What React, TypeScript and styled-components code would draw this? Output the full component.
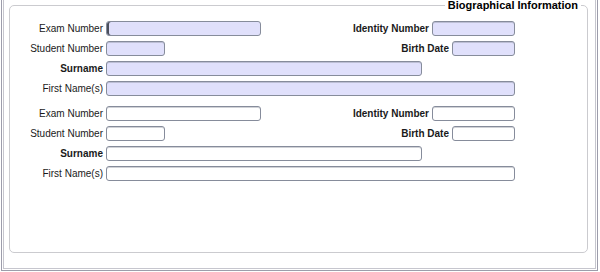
import React from "react";
import styled, { createGlobalStyle } from "styled-components";

const Global = createGlobalStyle`
  html, body { margin: 0; padding: 0; background: #ffffff; }
  body { font-family: "Liberation Sans", Arial, sans-serif; color: #000; }
  #root { width: 600px; height: 272px; overflow: hidden; }
`;

const Shell = styled.div`
  box-sizing: border-box;
  width: 597px;
  height: 271px;
  margin-left: 1px;
  border: 1px solid #9d9dab;
  border-top: none;
  padding: 0 1px 1px 1px;
`;

const Inner = styled.div`
  box-sizing: border-box;
  height: 100%;
  border: 1px solid #c6c6ce;
  border-top: none;
  padding: 0 7px 0 5px;
`;

const Fieldset = styled.fieldset`
  box-sizing: border-box;
  margin: 0;
  height: 253px;
  padding: 0;
  border: 1px solid #cbcbcf;
  border-radius: 5px;
  min-width: 0;
`;

const Legend = styled.legend`
  margin-left: auto;
  margin-right: 6px;
  padding: 0 3px;
  font-size: 11px;
  line-height: 11px;
  font-weight: bold;
  color: #000;
`;

const Form = styled.div`
  display: flex;
  flex-direction: column;
  gap: 10px;
  padding: 10px 72px 0 0;
`;

const Group = styled.div`
  display: flex;
  flex-direction: column;
  gap: 5px;
`;

const Row = styled.div`
  display: flex;
  align-items: center;
  height: 15px;
`;

const Label = styled.label<{ $bold?: boolean; $w?: number }>`
  flex-shrink: 0;
  ${(p) => (p.$w ? `width: ${p.$w}px;` : "")}
  margin-right: 3px;
  text-align: right;
  white-space: nowrap;
  font-size: 10px;
  line-height: 15px;
  font-weight: ${(p) => (p.$bold ? "bold" : "normal")};
  color: #1a1a1a;
`;

const Field = styled.input<{ $w: number; $filled?: boolean; $focused?: boolean }>`
  appearance: none;
  flex-shrink: 0;
  box-sizing: border-box;
  width: ${(p) => p.$w}px;
  height: 15px;
  margin: 0;
  padding: 0 2px;
  border: 1px solid #868c9b;
  border-radius: 3px;
  background: ${(p) => (p.$filled ? "#e0e0fb" : "#ffffff")};
  box-shadow: ${(p) => (p.$focused ? "inset 2px 0 0 #4a4f5c" : "inset 0 1px 0 rgba(120,126,140,0.35)")};
  font-family: "Liberation Sans", Arial, sans-serif;
  font-size: 10px;
  outline: none;
`;

const Side = styled.div`
  margin-left: auto;
  display: flex;
  align-items: center;
`;

type GroupProps = { filled: boolean };

function FormGroup({ filled }: GroupProps) {
  return (
    <Group>
      <Row>
        <Label $w={93}>Exam Number</Label>
        <Field $w={155} $filled={filled} $focused={filled} readOnly />
        <Side>
          <Label $bold>Identity Number</Label>
          <Field $w={83} $filled={filled} readOnly />
        </Side>
      </Row>
      <Row>
        <Label $w={93}>Student Number</Label>
        <Field $w={59} $filled={filled} readOnly />
        <Side>
          <Label $bold>Birth Date</Label>
          <Field $w={63} $filled={filled} readOnly />
        </Side>
      </Row>
      <Row>
        <Label $w={93} $bold>Surname</Label>
        <Field $w={316} $filled={filled} readOnly />
      </Row>
      <Row>
        <Label $w={93}>First Name(s)</Label>
        <Field $w={409} $filled={filled} readOnly />
      </Row>
    </Group>
  );
}

export default function App() {
  return (
    <>
      <Global />
      <Shell>
        <Inner>
          <Fieldset>
            <Legend>Biographical Information</Legend>
            <Form>
              <FormGroup filled />
              <FormGroup filled={false} />
            </Form>
          </Fieldset>
        </Inner>
      </Shell>
    </>
  );
}
